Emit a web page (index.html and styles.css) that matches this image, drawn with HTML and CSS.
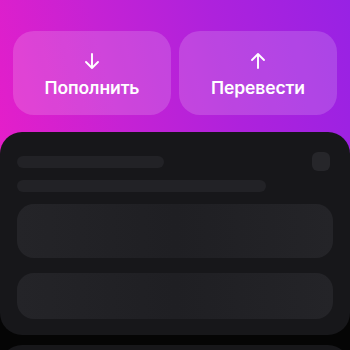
FILE: index.html
```html
<!DOCTYPE html>
<html lang="ru">
<head>
<meta charset="utf-8">
<link rel="stylesheet" href="styles.css">
</head>
<body>
<div class="app">
  <div class="actions">
    <div class="action">
      <svg class="ico" width="18" height="18" viewBox="0 0 18 18" fill="none" stroke="#fff" stroke-width="1.9" stroke-linecap="round" stroke-linejoin="round"><path d="M9 2V16M3 10l6 6 6-6"/></svg>
      <span class="label">Пополнить</span>
    </div>
    <div class="action">
      <svg class="ico" width="18" height="18" viewBox="0 0 18 18" fill="none" stroke="#fff" stroke-width="1.9" stroke-linecap="round" stroke-linejoin="round"><path d="M9 16V2M3 8l6-6 6 6"/></svg>
      <span class="label">Перевести</span>
    </div>
  </div>
  <div class="card">
    <div class="row">
      <div class="bar bar-a"></div>
      <div class="sq"></div>
    </div>
    <div class="bar bar-b"></div>
    <div class="block block-a"></div>
    <div class="block block-b"></div>
  </div>
  <div class="card next"></div>
</div>
</body>
</html>
```
FILE: styles.css
```css
html, body {
  margin: 0;
  padding: 0;
  background: #050505;
}
.app {
  width: 350px;
  height: 350px;
  overflow: hidden;
  font-family: Inter, "Noto Sans", sans-serif;
  background:
    linear-gradient(75deg, #e81ec8 0%, #c622d4 35%, #ae22dc 65%, #9822e4 100%) top left / 100% 200px no-repeat,
    #050505;
}
.actions {
  display: flex;
  gap: 8px;
  padding: 31px 13px 0;
}
.action {
  flex: 1;
  height: 84px;
  border-radius: 21px;
  background: rgba(255, 255, 255, 0.16);
  display: flex;
  flex-direction: column;
  align-items: center;
  justify-content: flex-start;
  box-sizing: border-box;
  padding-top: 21px;
  gap: 7px;
}
.ico {
  display: block;
}
.label {
  color: #fff;
  font-size: 17.5px;
  font-weight: 600;
  line-height: 22px;
  letter-spacing: -0.1px;
}
.card {
  margin-top: 17px;
  background: #17171a;
  border-radius: 22px;
  padding: 20px 17px 16px;
  display: flex;
  flex-direction: column;
}
.row {
  display: flex;
  justify-content: space-between;
  align-items: center;
  padding-right: 3px;
}
.bar {
  height: 12px;
  border-radius: 6px;
  background: #222226;
}
.bar-a {
  width: 147px;
}
.sq {
  width: 18px;
  height: 19px;
  border-radius: 6px;
  background: #26262a;
}
.bar-b {
  width: 249px;
  margin-top: 9px;
}
.block {
  border-radius: 17px;
  background: linear-gradient(90deg, #242428 0%, #1f1f23 50%, #242428 100%);
}
.block-a {
  margin-top: 12px;
  height: 54px;
}
.block-b {
  margin-top: 15px;
  height: 46px;
}
.next {
  margin-top: 10px;
  height: 60px;
  padding: 0;
}
```
